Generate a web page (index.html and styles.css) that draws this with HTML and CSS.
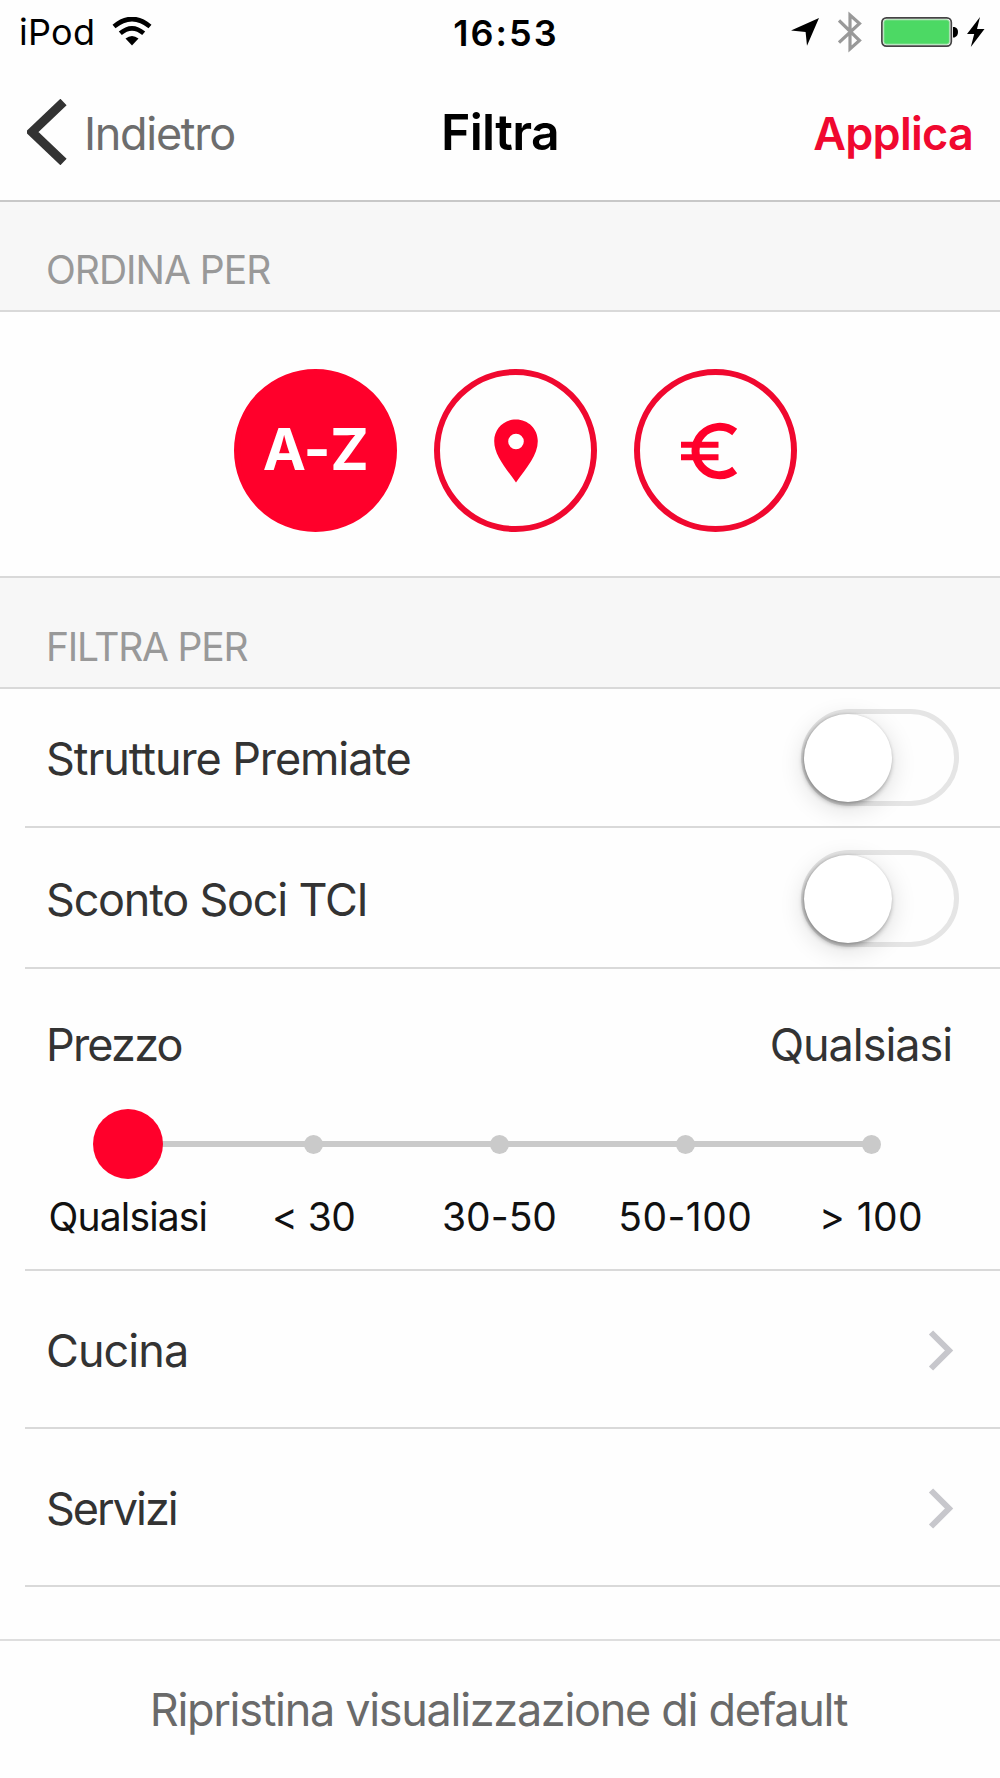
FILE: index.html
```
<!DOCTYPE html>
<html lang="it">
<head>
  <meta charset="UTF-8" />
  <meta name="viewport" content="width=device-width, initial-scale=1.0"/>
  <title>Filtra</title>
  <link rel="stylesheet" href="styles.css">
</head>
<body>

  <div class="status-bar">
    <div class="status-left">
      <span class="carrier">iPod</span>
      <svg class="wifi" width="40" height="30" viewBox="0 0 40 30">
        <path d="M2 9.5 Q20 -5.5 38 9.5" fill="none" stroke="#000" stroke-width="4.6"/>
        <path d="M8.3 16.3 Q20 6.3 31.7 16.3" fill="none" stroke="#000" stroke-width="4.6"/>
        <path d="M13.5 21.5 Q20 16.3 26.5 21.5 L20 28.5 Z"/>
      </svg>
    </div>
    <span class="clock">16:53</span>
    <div class="status-right">
      <svg width="28" height="28" viewBox="0 0 28 28">
        <path d="M28 0 L16 27.8 L14.6 14 L0 12.4 Z"/>
      </svg>
      <svg class="bluetooth" width="24" height="42" viewBox="0 0 24 42">
        <path d="M1 9.5 L21.5 29.5 L12 38 V4 L21.5 12.5 L1 31.5" fill="none" stroke="#999" stroke-width="3.2"/>
      </svg>
      <svg class="battery" width="78" height="30" viewBox="0 0 78 30">
        <rect x="0.9" y="0.9" width="69.4" height="28.2" rx="4.5" fill="#fff" stroke="#444" stroke-width="1.7"/>
        <rect x="2.8" y="2.8" width="65.6" height="24.4" rx="2.5" fill="#4cd964" stroke="#a9dfb0" stroke-width="1"/>
        <path d="M72 10 H73.5 Q77 11 77 15 Q77 19 73.5 20.5 H72 Z"/>
      </svg>
      <svg class="bolt" width="18" height="30" viewBox="0 0 18 30">
        <path d="M13 0 L0 17 H7.2 L3.8 30 L17.5 12 H10 Z"/>
      </svg>
    </div>
  </div>

  <header class="nav">
    <a href="#" class="back">
      <svg width="40" height="66" viewBox="0 0 40 66">
        <path d="M36.5 3 L5 33 L36.5 63" fill="none" stroke="#333" stroke-width="9"/>
      </svg>
      <span>Indietro</span>
    </a>
    <h1>Filtra</h1>
    <a href="#" class="apply">Applica</a>
  </header>

  <h2 class="section-title sort-title">ORDINA PER</h2>
  <div class="sort">
    <button class="sort-button active">A-Z</button>
    <button class="sort-button">
      <svg width="44" height="64" viewBox="0 0 44 64">
        <path fill-rule="evenodd" d="M22 0.5 C9.7 0.5 0.2 10 0.2 22 C0.2 36 11 48 22 63.5 C33 48 43.8 36 43.8 22 C43.8 10 34.3 0.5 22 0.5 Z M22 14.7 a7.8 7.8 0 1 1 0 15.6 a7.8 7.8 0 1 1 0 -15.6 Z" fill="#ff002b"/>
      </svg>
    </button>
    <button class="sort-button">
      <svg class="euro" width="58" height="58" viewBox="0 0 58 58">
        <path d="M54.7 10 A24.2 24.2 0 1 0 54.7 48" fill="none" stroke="#ff002b" stroke-width="8"/>
        <path d="M1 22.8 H38.5 M1 35.3 H38.5" stroke="#ff002b" stroke-width="6"/>
      </svg>
    </button>
  </div>

  <h2 class="section-title filter-title">FILTRA PER</h2>
  <div class="filters">
    <div class="row awarded">
      <span>Strutture Premiate</span>
      <div class="toggle"><div class="toggle-knob"></div></div>
    </div>
    <div class="row discount">
      <span>Sconto Soci TCI</span>
      <div class="toggle"><div class="toggle-knob"></div></div>
    </div>

    <div class="price">
      <div class="price-head">
        <span class="price-name">Prezzo</span>
        <span class="price-value">Qualsiasi</span>
      </div>
      <div class="slider">
        <div class="step selected"><i></i><span class="any">Qualsiasi</span></div>
        <div class="step"><i></i><span class="under">&lt; 30</span></div>
        <div class="step"><i></i><span>30-50</span></div>
        <div class="step"><i></i><span class="wide">50-100</span></div>
        <div class="step"><i></i><span class="wide">&gt; 100</span></div>
      </div>
    </div>

    <div class="row link">
      <span class="cuisine">Cucina</span>
      <svg width="26" height="42" viewBox="0 0 26 42">
        <path d="M3 3.5 L21 21.5 L3 39.5" fill="none" stroke="#c7c7cc" stroke-width="6"/>
      </svg>
    </div>
    <div class="row link">
      <span class="services">Servizi</span>
      <svg width="26" height="42" viewBox="0 0 26 42">
        <path d="M3 3.5 L21 21.5 L3 39.5" fill="none" stroke="#c7c7cc" stroke-width="6"/>
      </svg>
    </div>
  </div>

  <footer>
    <a href="#">Ripristina visualizzazione di default</a>
  </footer>

</body>
</html>
```
FILE: styles.css
```
:root {
  --red: #ff002b;
  --line: #d9d9d9;
  --text: #333;
}

* {
  box-sizing: border-box;
}

body {
  font-family: Inter, "Liberation Sans", sans-serif;
  font-size: 45px;
  background-color: #fefefe;
  color: var(--text);
  margin: 0;
  height: 1778px;
  display: flex;
  flex-direction: column;
}

a {
  text-decoration: none;
}

svg {
  display: block;
  flex: none;
}

/* status bar */
.status-bar {
  display: grid;
  grid-template-columns: 1fr auto 1fr;
  align-items: center;
  height: 64px;
  padding: 0 15px 0 19px;
  font-size: 36px;
  line-height: 44px;
  color: #000;
}

.status-left, .status-right {
  display: flex;
  align-items: center;
}

.carrier {
  letter-spacing: 0.3px;
}

.wifi {
  margin-left: 17px;
}

.clock {
  font-weight: 600;
  letter-spacing: 2px;
  padding: 1px 0 0 8px;
}

.status-right {
  justify-content: flex-end;
}

.bluetooth {
  margin-left: 19px;
}

.battery {
  margin-left: 19px;
}

.bolt {
  margin-left: 8px;
}

/* navigation */
.nav {
  display: grid;
  grid-template-columns: 1fr auto 1fr;
  align-items: center;
  height: 138px;
  padding: 0 27px 0 27px;
  border-bottom: 2px solid #c8c8c8;
}

.back {
  display: flex;
  align-items: center;
  color: #6d6d6d;
  letter-spacing: -1.3px;
}

.back span {
  padding: 3px 0 0 17px;
}

.nav h1 {
  margin: 0;
  font-size: 50px;
  font-weight: 600;
  letter-spacing: -0.65px;
  color: #000;
}

.apply {
  justify-self: end;
  padding-top: 3px;
  font-weight: 600;
  letter-spacing: -0.75px;
  color: #f0082f;
}

/* section titles */
.section-title {
  flex: none;
  margin: 0;
  padding-left: 46px;
  font-size: 39px;
  font-weight: 400;
  line-height: 48px;
  color: #999;
  background: #f7f7f7;
  border-bottom: 2px solid var(--line);
}

.sort-title {
  height: 110px;
  padding-top: 44px;
  letter-spacing: -1px;
}

.filter-title {
  height: 113px;
  padding-top: 45px;
  letter-spacing: -1.2px;
  border-top: 2px solid var(--line);
}

/* sort buttons */
.sort {
  display: flex;
  gap: 37px;
  height: 264px;
  padding: 57px 0 0 234px;
}

.sort-button {
  display: flex;
  align-items: center;
  justify-content: center;
  width: 163px;
  height: 163px;
  padding: 0;
  border: 6px solid #f0082f;
  border-radius: 50%;
  background: none;
  font: 700 58px/58px Inter, "Liberation Sans", sans-serif;
  font-feature-settings: "calt" 0;
  letter-spacing: -0.5px;
}

.sort-button.active {
  padding: 0 0 4px 0;
  border-color: var(--red);
  background: var(--red);
  color: #fff;
}

.euro {
  margin-right: 13px;
}

/* filter rows */
.row {
  display: flex;
  align-items: center;
  justify-content: space-between;
  margin-left: 25px;
  padding: 0 41px 0 21px;
  border-bottom: 2px solid var(--line);
}

.row span {
  padding-top: 2px;
}

.awarded {
  height: 139px;
  letter-spacing: -1.1px;
}

.discount {
  height: 141px;
  padding-top: 2px;
  letter-spacing: -1.23px;
}

.toggle {
  width: 158px;
  height: 97px;
  border: 5px solid #e5e5e5;
  border-radius: 49px;
}

.toggle-knob {
  width: 88px;
  height: 88px;
  margin-left: -2px;
  border-radius: 50%;
  background: #fff;
  box-shadow: -1px 0 3px rgba(0,0,0,0.15), -1px 3px 5px rgba(0,0,0,0.3), 0 6px 26px rgba(0,0,0,0.14);
}

/* price slider */
.price {
  height: 302px;
  margin-left: 25px;
  padding: 48px 36px 0 10px;
  border-bottom: 2px solid var(--line);
}

.price-head {
  display: flex;
  justify-content: space-between;
  padding: 0 12px 0 11px;
  line-height: 55px;
}

.price-name {
  letter-spacing: -1.8px;
}

.price-value {
  letter-spacing: -1.05px;
}

.slider {
  display: grid;
  grid-template-columns: repeat(5, 1fr);
  margin-top: 37px;
  font-size: 39px;
  font-feature-settings: "calt" 0;
  line-height: 48px;
  color: #111;
}

.step {
  display: grid;
  grid-template-rows: 70px 48px;
  row-gap: 14px;
  justify-items: center;
  align-items: center;
  background: linear-gradient(#cacaca, #cacaca) 0 32px / 100% 6px no-repeat;
}

.step:first-child {
  background-size: 50% 6px;
  background-position: 100% 32px;
}

.step:last-child {
  background-size: 50% 6px;
}

.step i {
  width: 19px;
  height: 19px;
  border-radius: 50%;
  background: #cacaca;
}

.step.selected i {
  width: 70px;
  height: 70px;
  background: var(--red);
}

.any {
  letter-spacing: -0.84px;
}

.under {
  letter-spacing: -0.5px;
}

.wide {
  letter-spacing: 0.45px;
}

/* link rows */
.link {
  height: 158px;
  padding: 1px 46px 0 21px;
}

.cuisine {
  letter-spacing: -0.95px;
}

.services {
  letter-spacing: -2px;
}

/* reset */
footer {
  display: flex;
  align-items: center;
  justify-content: center;
  height: 139px;
  margin-top: auto;
  padding-right: 3px;
  border-top: 2px solid #dedede;
}

footer a {
  color: #6a6a6a;
  letter-spacing: -1.3px;
}
```
